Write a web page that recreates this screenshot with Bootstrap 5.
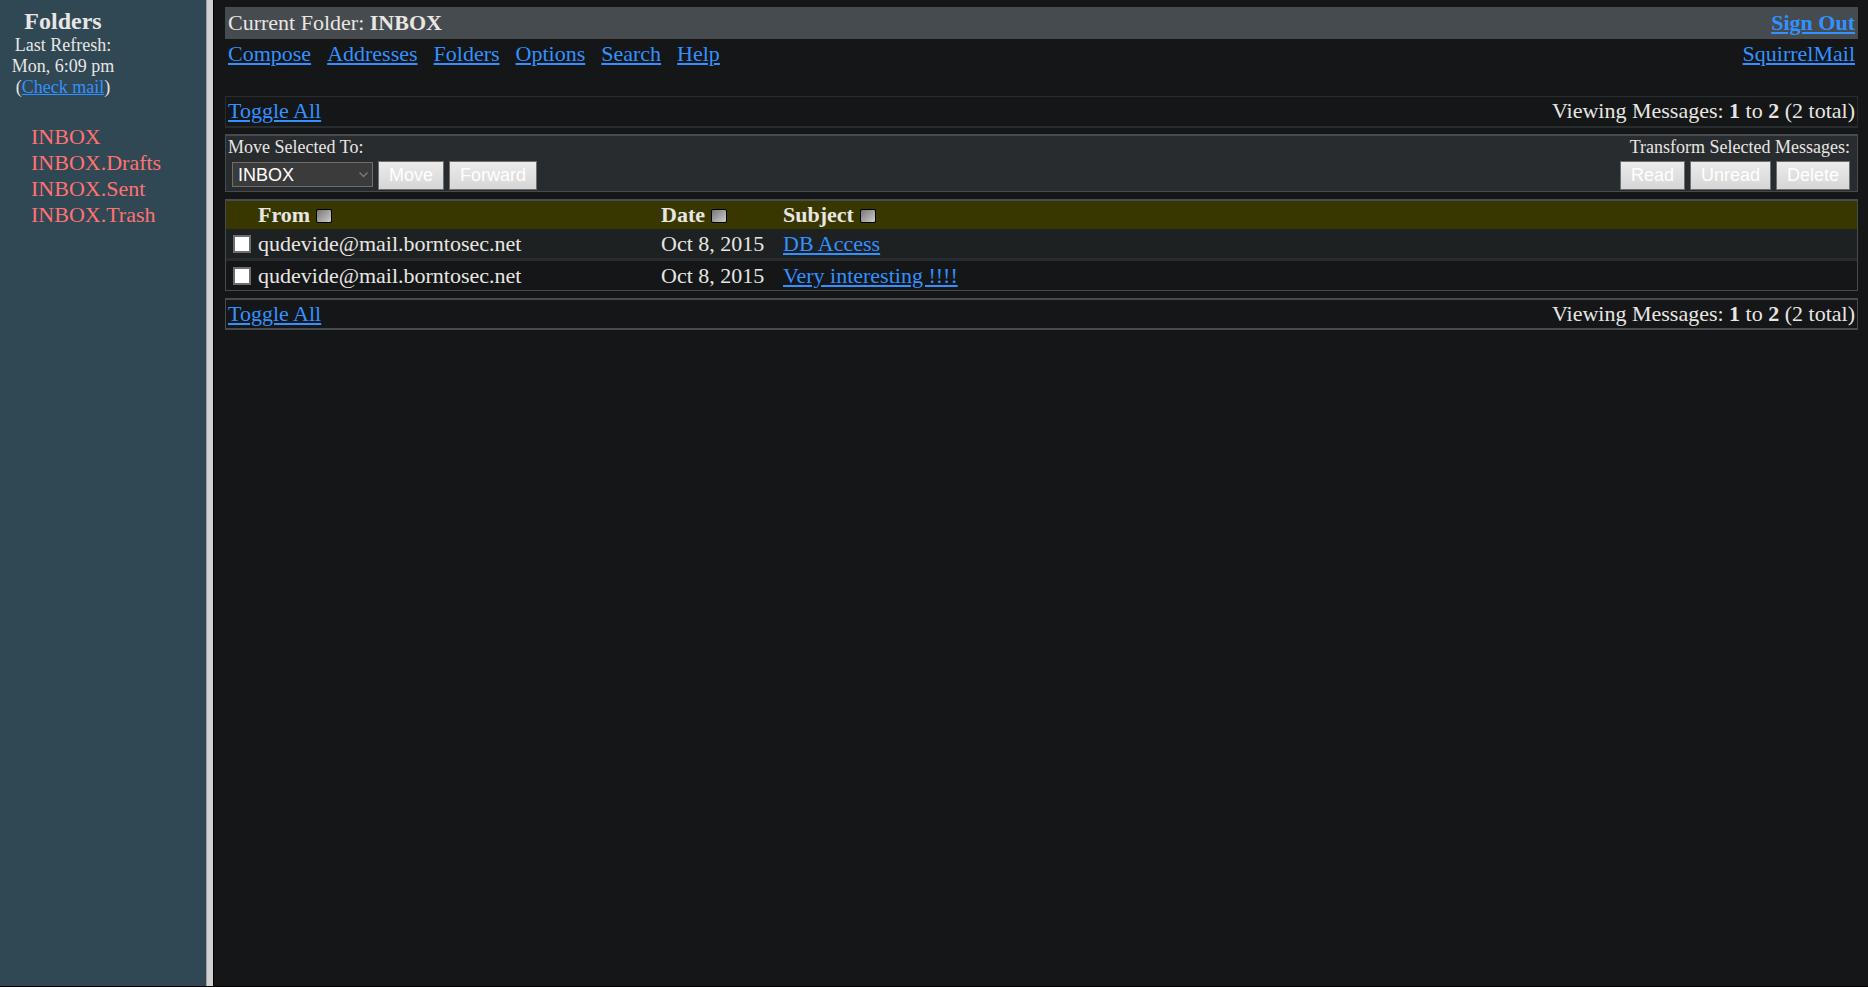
<!DOCTYPE html>
<html lang="en">
<head>
<meta charset="utf-8">
<meta name="viewport" content="width=device-width, initial-scale=1">
<title>SquirrelMail</title>
<link href="https://cdn.jsdelivr.net/npm/bootstrap@5.3.0/dist/css/bootstrap.min.css" rel="stylesheet">
<style>
  body { background: #151617; color: #e8e6e3; font-family: "Liberation Serif", "Times New Roman", serif; font-size: 22px; line-height: 26px; }
  a { color: #3391ff; text-decoration: underline; }
  .frames { border-bottom: 1px solid #000; }
  .side-pane { width: 206px; background: #304754; }
  .side-head { width: 126px; font-size: 18px; line-height: 21px; padding-top: 7px; }
  .side-head h1 { font-size: 24px; line-height: 28px; font-weight: 700; margin: 0; }
  .side-list { margin-top: 26px; padding-left: 31px; }
  .side-list a { color: #ff7272; text-decoration: none; }
  .splitter { width: 8px; background: #d0d0d0; border-left: 1px solid #a0a0a0; border-right: 1px solid #000; }
  .main-pane { padding: 7px 10px 0 11px; min-width: 0; }
  .title-bar { background: #464b4f; padding: 3px; }
  .menu-row { padding: 2px 3px; margin-bottom: 27px; }
  .menu-links { gap: 16px; }
  .page-bar { border: 1px solid #292c2e; border-bottom-width: 2px; padding: 1px 2px 2px; margin-bottom: 6px; }
  .page-bar-strong { border-color: #464b4f; border-top-width: 2px; margin-bottom: 0; padding-bottom: 1px; }
  .action-bar { background: #292c2f; border: 1px solid #464b4f; border-top-width: 2px; padding: 0 2px 1px; margin-bottom: 7px; font-size: 18px; line-height: 23px; }
  .action-bar .controls { gap: 5px; padding-top: 2px; }
  .action-bar .form-select, .action-bar .btn { font: 18px/20px "Liberation Sans", Arial, sans-serif; border-radius: 0; border: 1px solid #6e6e6e; }
  .action-bar .form-select { width: 141px; height: 25px; padding: 0 20px 0 5px; margin: 1px 0 0 4px; color: #fff; background-color: #3b3b3b; background-position: right 3px center; background-size: 11px; background-image: url("data:image/svg+xml,%3Csvg xmlns='http://www.w3.org/2000/svg' viewBox='0 0 11 11'%3E%3Cpath d='M1.5 3.5l4 4 4-4' fill='none' stroke='%23777' stroke-width='1.5'/%3E%3C/svg%3E"); }
  .action-bar .btn { height: 29px; padding: 0 10px 2px; color: #fff; background: linear-gradient(#ebebeb, #d6d6d6); }
  .right-actions { padding-right: 5px; }
  .mail-list { border: 1px solid #464b4f; border-top-width: 2px; margin-bottom: 7px; }
  .mail-list table { width: 100%; table-layout: fixed; border-collapse: separate; border-spacing: 0; }
  .mail-list td, .mail-list th { padding: 0; text-align: left; white-space: nowrap; }
  .mail-list thead tr { background: #393700; height: 28px; }
  .mail-list tbody tr { height: 29px; }
  .mail-list .odd-row { background: #1e2122; }
  .mail-list .odd-row + tr { height: 32px; }
  .mail-list .odd-row + tr td { border-top: 3px solid #292c2f; }
  .col-check { width: 32px; }
  .col-from { width: 403px; }
  .col-date { width: 122px; }
  .mail-list .form-check-input { width: 18px; height: 18px; margin: 0 0 0 7px; border: 2px solid #6e6e6e; border-radius: 0; background-color: #fff; display: block; float: none; }
  .mail-list .form-check-input:checked { background-color: #3391ff; }
  .sort-btn { width: 16px; height: 14px; margin-left: 6px; border: 1px solid #000; border-radius: 2px; padding: 0; display: inline-block; vertical-align: 0; background: linear-gradient(135deg, #777, #ccc); }
</style>
</head>
<body>
<div class="frames d-flex min-vh-100">
  <aside class="side-pane flex-shrink-0">
    <div class="side-head text-center">
      <h1>Folders</h1>
      <div>Last Refresh:</div>
      <div>Mon, 6:09 pm</div>
      <div>(<a href="#">Check mail</a>)</div>
    </div>
    <ul class="side-list list-unstyled mb-0">
      <li><a href="#">INBOX</a></li>
      <li><a href="#">INBOX.Drafts</a></li>
      <li><a href="#">INBOX.Sent</a></li>
      <li><a href="#">INBOX.Trash</a></li>
    </ul>
  </aside>
  <div class="splitter flex-shrink-0"></div>
  <main class="main-pane flex-grow-1">
    <header class="title-bar d-flex justify-content-between">
      <div>Current Folder: <b>INBOX</b></div>
      <a href="#" class="fw-bold">Sign Out</a>
    </header>
    <nav class="menu-row d-flex justify-content-between">
      <div class="menu-links d-flex">
        <a href="#">Compose</a>
        <a href="#">Addresses</a>
        <a href="#">Folders</a>
        <a href="#">Options</a>
        <a href="#">Search</a>
        <a href="#">Help</a>
      </div>
      <a href="#">SquirrelMail</a>
    </nav>
    <div class="page-bar d-flex justify-content-between">
      <a href="#">Toggle All</a>
      <div>Viewing Messages: <b>1</b> to <b>2</b> (2 total)</div>
    </div>
    <form>
      <div class="action-bar d-flex justify-content-between">
        <div>
          <label for="target" class="d-block">Move Selected To:</label>
          <div class="controls d-flex">
            <select id="target" class="form-select">
              <option>INBOX</option>
              <option>INBOX.Drafts</option>
              <option>INBOX.Sent</option>
              <option>INBOX.Trash</option>
            </select>
            <button type="button" class="btn">Move</button>
            <button type="button" class="btn">Forward</button>
          </div>
        </div>
        <div class="right-actions text-end">
          <div>Transform Selected Messages:</div>
          <div class="controls d-flex justify-content-end">
            <button type="button" class="btn">Read</button>
            <button type="button" class="btn">Unread</button>
            <button type="button" class="btn">Delete</button>
          </div>
        </div>
      </div>
      <div class="mail-list">
        <table>
          <thead>
            <tr>
              <th class="col-check"></th>
              <th class="col-from">From<button type="button" class="sort-btn" aria-label="Sort by sender"></button></th>
              <th class="col-date">Date<button type="button" class="sort-btn" aria-label="Sort by date"></button></th>
              <th>Subject<button type="button" class="sort-btn" aria-label="Sort by subject"></button></th>
            </tr>
          </thead>
          <tbody>
            <tr class="odd-row">
              <td><input type="checkbox" id="msg1" class="form-check-input"></td>
              <td><label for="msg1">qudevide@mail.borntosec.net</label></td>
              <td>Oct 8, 2015</td>
              <td><a href="#">DB Access</a></td>
            </tr>
            <tr>
              <td><input type="checkbox" id="msg2" class="form-check-input"></td>
              <td><label for="msg2">qudevide@mail.borntosec.net</label></td>
              <td>Oct 8, 2015</td>
              <td><a href="#">Very interesting !!!!</a></td>
            </tr>
          </tbody>
        </table>
      </div>
    </form>
    <div class="page-bar page-bar-strong d-flex justify-content-between">
      <a href="#">Toggle All</a>
      <div>Viewing Messages: <b>1</b> to <b>2</b> (2 total)</div>
    </div>
  </main>
</div>
<script src="https://cdn.jsdelivr.net/npm/bootstrap@5.3.0/dist/js/bootstrap.bundle.min.js"></script>
</body>
</html>
